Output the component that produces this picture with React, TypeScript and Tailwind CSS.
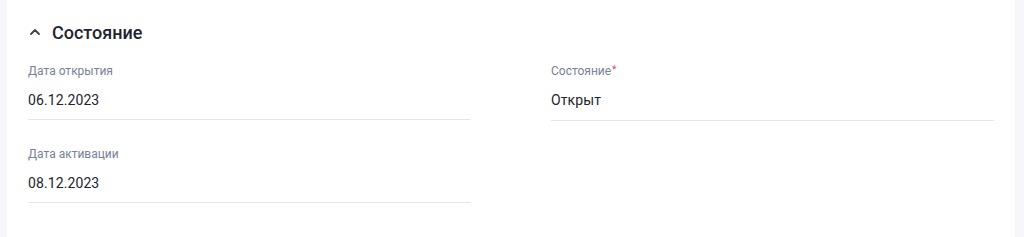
import React from "react";

function Field({ label, value, required, extra }: { label: string; value: string; required?: boolean; extra?: boolean }) {
  return (
    <div className={`flex flex-col border-b border-[#e3e5e9] ${extra ? "pb-[10px]" : "pb-[9px]"}`}>
      <div className="text-[12px] leading-[16px] text-[#77829a]">
        {label}
        {required && <span className="ml-[1px] align-top text-[10px] leading-[14px] text-[#e5484d]">*</span>}
      </div>
      <div className="mt-[11px] text-[14px] leading-[20px] tracking-[0.1px] text-[#1e2430]">{value}</div>
    </div>
  );
}

export default function App() {
  return (
    <div
      className="flex h-[237px] w-full bg-[#f6f7fb] pl-[7px] pr-[9px]"
      style={{ fontFamily: "Roboto, 'Noto Sans', sans-serif" }}
    >
      <div className="flex-1 bg-white px-[21px] pt-[18px]">
        <div className="flex items-center gap-[11px] h-[28px]">
          <svg width="12" height="12" viewBox="0 0 12 12" className="ml-[1px]">
            <path d="M2 8 L6 4 L10 8" fill="none" stroke="#3a4252" strokeWidth="1.8" strokeLinecap="round" strokeLinejoin="round" />
          </svg>
          <span className="text-[18px] font-medium text-[#1e2430]">Состояние</span>
        </div>
        <div className="mt-[17px] grid grid-cols-2 gap-x-[80px]">
          <div className="flex flex-col gap-[26px]">
            <Field label="Дата открытия" value="06.12.2023" />
            <Field label="Дата активации" value="08.12.2023" />
          </div>
          <div className="flex flex-col">
            <Field label="Состояние" value="Открыт" required extra />
          </div>
        </div>
      </div>
    </div>
  );
}
